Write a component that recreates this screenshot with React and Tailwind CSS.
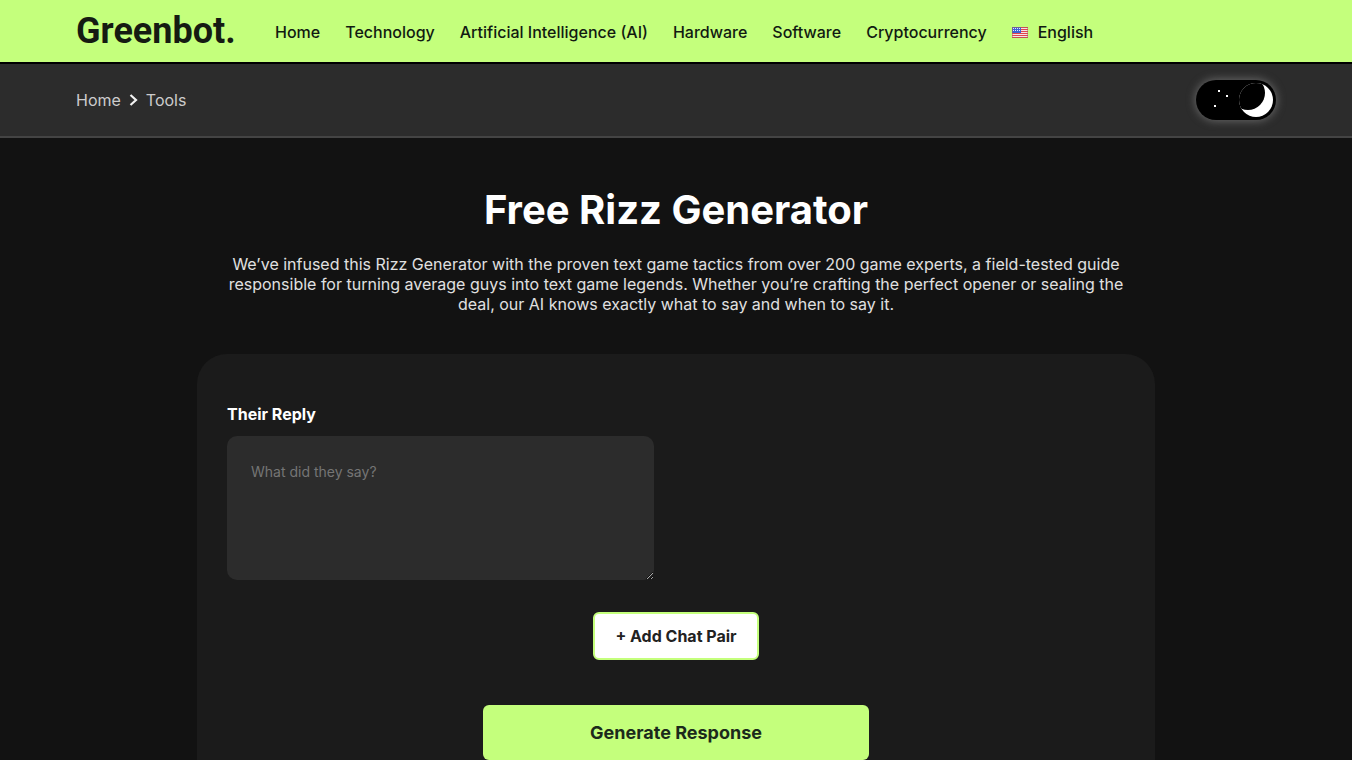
import { useState } from 'react'

const links = [
  'Home',
  'Technology',
  'Artificial Intelligence (AI)',
  'Hardware',
  'Software',
  'Cryptocurrency',
]

function UsFlag() {
  return (
    <svg viewBox="0 0 16 11" className="h-[11px] w-4" aria-hidden="true">
      <rect width="16" height="11" fill="#f5e3e5" />
      {[0, 2, 4, 6, 8, 10].map((y) => (
        <rect key={y} y={y} width="16" height="1" fill="#e0454b" />
      ))}
      <rect width="9" height="6" fill="#3b62d6" />
      {[1, 3, 5, 7].map((x) => (
        <g key={x} fill="#dfe7ff">
          <rect x={x} y="1" width="1" height="1" />
          <rect x={x} y="3" width="1" height="1" />
        </g>
      ))}
      <rect x="0.5" y="0.5" width="15" height="10" fill="none" stroke="#a85a60" strokeOpacity="0.5" />
    </svg>
  )
}

function ThemeSwitch() {
  const [dark, setDark] = useState(true)

  return (
    <label className="block h-10 w-20 cursor-pointer rounded-full bg-black shadow-[0_0_8px_1px_#666666]">
      <input
        type="checkbox"
        className="sr-only"
        aria-label="Dark mode"
        checked={dark}
        onChange={(e) => setDark(e.target.checked)}
      />
      <svg viewBox="0 0 80 40" className="h-10 w-20" aria-hidden="true">
        <g fill="#ffffff">
          <rect x="22" y="10" width="2" height="2" />
          <rect x="30" y="15" width="2" height="2" />
          <rect x="18" y="25" width="2" height="2" />
        </g>
        {/* moon: white disc with a black disc over it */}
        <clipPath id="moon">
          <circle cx="60" cy="20" r="17" />
        </clipPath>
        <circle cx="60" cy="20" r="17" fill="#ffffff" />
        <circle cx="52" cy="13" r="17" fill="#000000" clipPath="url(#moon)" />
      </svg>
    </label>
  )
}

export default function App() {
  const [reply, setReply] = useState('')

  return (
    <div className="min-h-screen bg-[#121212] font-['Inter',sans-serif] text-base text-white">
      <header className="border-b-2 border-black bg-[#c4ff7c] px-6 text-[#111a11]">
        <div className="mx-auto flex h-[62px] max-w-[1200px] items-center">
          <a
            href="#"
            className="w-[158px] font-['Roboto',sans-serif] text-[36px] leading-[62px] font-bold whitespace-nowrap text-[#151b12]"
          >
            Greenbot.
          </a>
          <nav className="ml-[41px] flex items-center gap-[25px] pt-[2px] font-medium whitespace-nowrap">
            {links.map((link) => (
              <a key={link} href="#">
                {link}
              </a>
            ))}
            <a href="#" className="flex items-center gap-[10px]">
              <UsFlag />
              English
            </a>
          </nav>
        </div>
      </header>

      <div className="border-b-2 border-[#444444] bg-[#2c2c2c] px-6">
        <div className="mx-auto flex max-w-[1200px] items-center justify-between py-4">
          <div className="flex items-center gap-2 text-[#cccccc]">
            <a href="#">Home</a>
            <svg viewBox="0 0 9 14" className="h-[14px] w-[9px]" fill="none" stroke="#f2f2f2" strokeWidth="2.2" aria-hidden="true">
              <path d="M1.5 2 L7 7 L1.5 12" />
            </svg>
            <a href="#">Tools</a>
          </div>
          <ThemeSwitch />
        </div>
      </div>

      <main className="mx-auto max-w-[958px] pt-12 pb-16">
        <h1 className="text-center text-[40px] leading-[48px] font-bold">Free Rizz Generator</h1>
        <p className="mx-auto mt-5 max-w-[918px] text-center leading-5 text-[#e0e0e0]">
          We’ve infused this Rizz Generator with the proven text game tactics from over 200 game experts, a
          field-tested guide responsible for turning average guys into text game legends. Whether you’re crafting
          the perfect opener or sealing the deal, our AI knows exactly what to say and when to say it.
        </p>

        <form
          className="mt-10 flex flex-col items-center rounded-[30px] bg-[#1b1b1b] px-[30px] pt-12 pb-12"
          onSubmit={(e) => e.preventDefault()}
        >
          <div className="grid w-full grid-cols-2 gap-11">
            <div>
              <label htmlFor="reply" className="block leading-6 font-bold">
                Their Reply
              </label>
              <textarea
                id="reply"
                className="mt-[10px] block h-36 w-full rounded-[10px] bg-[#2c2c2c] p-6 text-sm leading-6 placeholder-[#757575] outline-none"
                placeholder="What did they say?"
                value={reply}
                onChange={(e) => setReply(e.target.value)}
              />
            </div>
          </div>

          <button
            type="button"
            className="mt-8 h-12 w-[166px] rounded-md border-2 border-[#c4ff7c] bg-white font-bold text-[#222222]"
          >
            + Add Chat Pair
          </button>

          <button
            type="submit"
            className="mt-[45px] h-[55px] w-[386px] rounded-md bg-[#c4ff7c] text-lg font-bold text-[#1b2a1b]"
          >
            Generate Response
          </button>
        </form>
      </main>
    </div>
  )
}
